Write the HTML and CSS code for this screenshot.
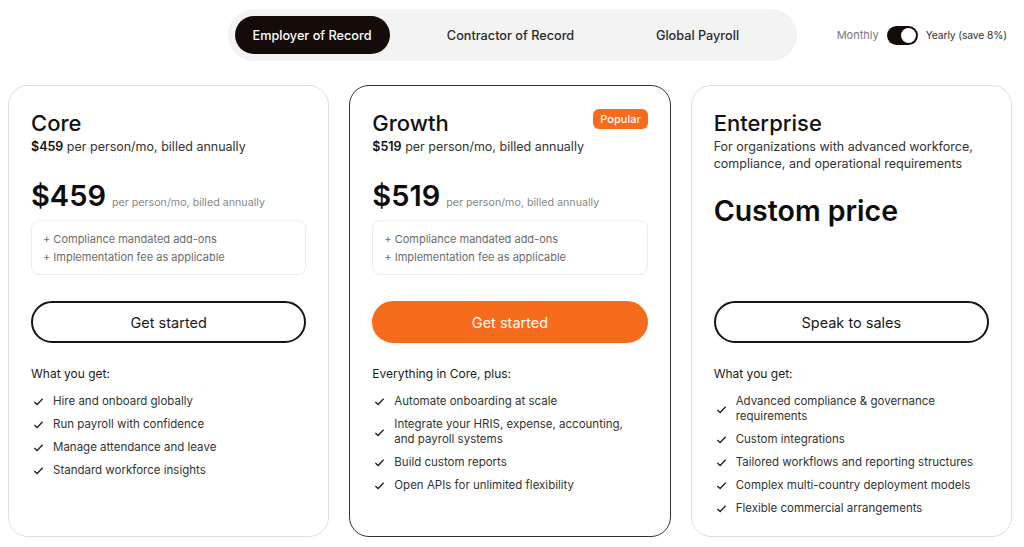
FILE: index.html
```html
<!DOCTYPE html>
<html lang="en">
<head>
    <meta charset="UTF-8">
    <meta name="viewport" content="width=device-width, initial-scale=1.0">
    <title>Pricing</title>
    <link rel="stylesheet" href="styles.css">
</head>
<body>
    <div class="header">
        <div></div>
        <div class="tabs">
            <div class="tab active">Employer of Record</div>
            <div class="tab tab2">Contractor of Record</div>
            <div class="tab tab3">Global Payroll</div>
        </div>
        <div class="billing">
            <span class="monthly">Monthly</span>
            <span class="switch"><span class="knob"></span></span>
            <span class="yearly">Yearly (save 8%)</span>
        </div>
    </div>

    <div class="plans">
        <div class="card">
            <div class="card-top">
                <div class="title-row"><h2>Core</h2></div>
                <p class="sub"><b>$459</b> per person/mo, billed annually</p>
                <div class="price"><span class="amount">$459</span><span class="per">per person/mo, billed annually</span></div>
                <div class="addons">
                    <div>+ Compliance mandated add-ons</div>
                    <div>+ Implementation fee as applicable</div>
                </div>
            </div>
            <button class="btn">Get started</button>
            <div class="label">What you get:</div>
            <ul class="features">
                <li><svg viewBox="0 0 12 12"><polyline points="1.5,6.5 4.5,9.2 10.5,3"/></svg><span>Hire and onboard globally</span></li>
                <li><svg viewBox="0 0 12 12"><polyline points="1.5,6.5 4.5,9.2 10.5,3"/></svg><span>Run payroll with confidence</span></li>
                <li><svg viewBox="0 0 12 12"><polyline points="1.5,6.5 4.5,9.2 10.5,3"/></svg><span>Manage attendance and leave</span></li>
                <li><svg viewBox="0 0 12 12"><polyline points="1.5,6.5 4.5,9.2 10.5,3"/></svg><span>Standard workforce insights</span></li>
            </ul>
        </div>

        <div class="card featured">
            <div class="card-top">
                <div class="title-row"><h2>Growth</h2><span class="badge">Popular</span></div>
                <p class="sub"><b>$519</b> per person/mo, billed annually</p>
                <div class="price"><span class="amount">$519</span><span class="per">per person/mo, billed annually</span></div>
                <div class="addons">
                    <div>+ Compliance mandated add-ons</div>
                    <div>+ Implementation fee as applicable</div>
                </div>
            </div>
            <button class="btn btn-orange">Get started</button>
            <div class="label">Everything in Core, plus:</div>
            <ul class="features">
                <li><svg viewBox="0 0 12 12"><polyline points="1.5,6.5 4.5,9.2 10.5,3"/></svg><span>Automate onboarding at scale</span></li>
                <li><svg viewBox="0 0 12 12"><polyline points="1.5,6.5 4.5,9.2 10.5,3"/></svg><span>Integrate your HRIS, expense, accounting, and payroll systems</span></li>
                <li><svg viewBox="0 0 12 12"><polyline points="1.5,6.5 4.5,9.2 10.5,3"/></svg><span>Build custom reports</span></li>
                <li><svg viewBox="0 0 12 12"><polyline points="1.5,6.5 4.5,9.2 10.5,3"/></svg><span>Open APIs for unlimited flexibility</span></li>
            </ul>
        </div>

        <div class="card">
            <div class="card-top">
                <div class="title-row"><h2>Enterprise</h2></div>
                <p class="desc">For organizations with advanced workforce, compliance, and operational requirements</p>
                <div class="custom">Custom price</div>
            </div>
            <button class="btn">Speak to sales</button>
            <div class="label">What you get:</div>
            <ul class="features">
                <li><svg viewBox="0 0 12 12"><polyline points="1.5,6.5 4.5,9.2 10.5,3"/></svg><span>Advanced compliance &amp; governance requirements</span></li>
                <li><svg viewBox="0 0 12 12"><polyline points="1.5,6.5 4.5,9.2 10.5,3"/></svg><span>Custom integrations</span></li>
                <li><svg viewBox="0 0 12 12"><polyline points="1.5,6.5 4.5,9.2 10.5,3"/></svg><span>Tailored workflows and reporting structures</span></li>
                <li><svg viewBox="0 0 12 12"><polyline points="1.5,6.5 4.5,9.2 10.5,3"/></svg><span>Complex multi-country deployment models</span></li>
                <li><svg viewBox="0 0 12 12"><polyline points="1.5,6.5 4.5,9.2 10.5,3"/></svg><span>Flexible commercial arrangements</span></li>
            </ul>
        </div>
    </div>
</body>
</html>
```

FILE: styles.css
```css
*{
    box-sizing: border-box;
    font-family: Inter, "Liberation Sans", sans-serif;
}
body{
    margin: 0;
    padding: 0;
    background-color: #ffffff;
    color: #1a1a1a;
}
.header{
    display: grid;
    grid-template-columns: 1fr auto 1fr;
    align-items: center;
    padding-top: 9px;
}
.tabs{
    display: flex;
    background-color: #f3f3f3;
    border-radius: 26px;
    padding: 7px 33px 7px 7px;
    height: 52px;
}
.tab{
    display: flex;
    align-items: center;
    justify-content: center;
    font-size: 12.7px;
    font-weight: 500;
    color: #2a2a2a;
    border-radius: 20px;
}
.tab.active{
    width: 155px;
    background-color: #150c09;
    color: #ffffff;
}
.tab2{
    width: 242px;
}
.tab3{
    width: 132px;
}
.billing{
    display: flex;
    align-items: center;
    justify-content: flex-end;
    padding-right: 17px;
    font-size: 11px;
}
.monthly{
    color: #777777;
}
.yearly{
    color: #333333;
    font-size: 10.3px;
    letter-spacing: -0.1px;
}
.switch{
    display: flex;
    justify-content: flex-end;
    align-items: center;
    width: 31px;
    height: 19px;
    margin: 0 8px 0 8px;
    border-radius: 10px;
    background-color: #150c09;
    padding: 2px;
}
.knob{
    width: 15px;
    height: 15px;
    border-radius: 50%;
    background-color: #ffffff;
}
.plans{
    display: grid;
    grid-template-columns: repeat(3, 1fr);
    gap: 20px;
    padding: 24px 12px 0 8px;
}
.card{
    height: 452px;
    border: 1px solid #dedede;
    border-radius: 20px;
    padding: 23px 22px 0;
    background-color: #ffffff;
}
.card.featured{
    border-color: #333333;
}
.card-top{
    height: 166px;
}
.title-row{
    display: flex;
    justify-content: space-between;
    align-items: flex-start;
}
h2{
    margin: 0;
    font-size: 22px;
    line-height: 28px;
    font-weight: 500;
    color: #111111;
}
.badge{
    background-color: #f76b1c;
    color: #ffffff;
    font-size: 11px;
    font-weight: 500;
    line-height: 20px;
    padding: 0 7px;
    border-radius: 6px;
}
.sub{
    margin: 1px 0 0;
    font-size: 12.5px;
    line-height: 18px;
    color: #333333;
}
.sub b{
    font-weight: 600;
    color: #111111;
}
.desc{
    margin: 1px 0 0;
    font-size: 12.5px;
    line-height: 17px;
    color: #333333;
}
.price{
    margin-top: 22px;
    height: 36px;
    display: flex;
    align-items: baseline;
}
.amount{
    font-size: 29px;
    line-height: 36px;
    font-weight: 600;
    color: #0d0d0d;
}
.per{
    font-size: 10.7px;
    line-height: 12px;
    color: #888888;
    margin-left: 6px;
}
.custom{
    margin-top: 22px;
    font-size: 28.5px;
    line-height: 34px;
    font-weight: 600;
    color: #0d0d0d;
}
.addons{
    margin-top: 6px;
    height: 55px;
    border: 1px solid #ececec;
    border-radius: 8px;
    padding: 9px 11px;
    font-size: 11px;
    line-height: 18px;
    color: #6b6b6b;
}
.btn{
    display: block;
    width: 100%;
    height: 42px;
    margin-top: 26px;
    border: 2px solid #1a1210;
    border-radius: 21px;
    background-color: #ffffff;
    font-size: 14.5px;
    color: #1a1a1a;
    cursor: pointer;
}
.btn-orange{
    background-color: #f76b1c;
    border-color: #f76b1c;
    color: #ffffff;
}
.label{
    margin-top: 22px;
    font-size: 12px;
    line-height: 18px;
    color: #1a1a1a;
}
.features{
    list-style: none;
    margin: 11px 0 0;
    padding: 0;
    display: flex;
    flex-direction: column;
    gap: 8px;
}
.features li{
    display: flex;
    align-items: center;
    padding-right: 10px;
    font-size: 11.5px;
    line-height: 15px;
    color: #333333;
}
.features svg{
    flex: none;
    width: 11px;
    height: 11px;
    margin: 0 9px 0 2px;
    fill: none;
    stroke: #222222;
    stroke-width: 1.5;
}
```
